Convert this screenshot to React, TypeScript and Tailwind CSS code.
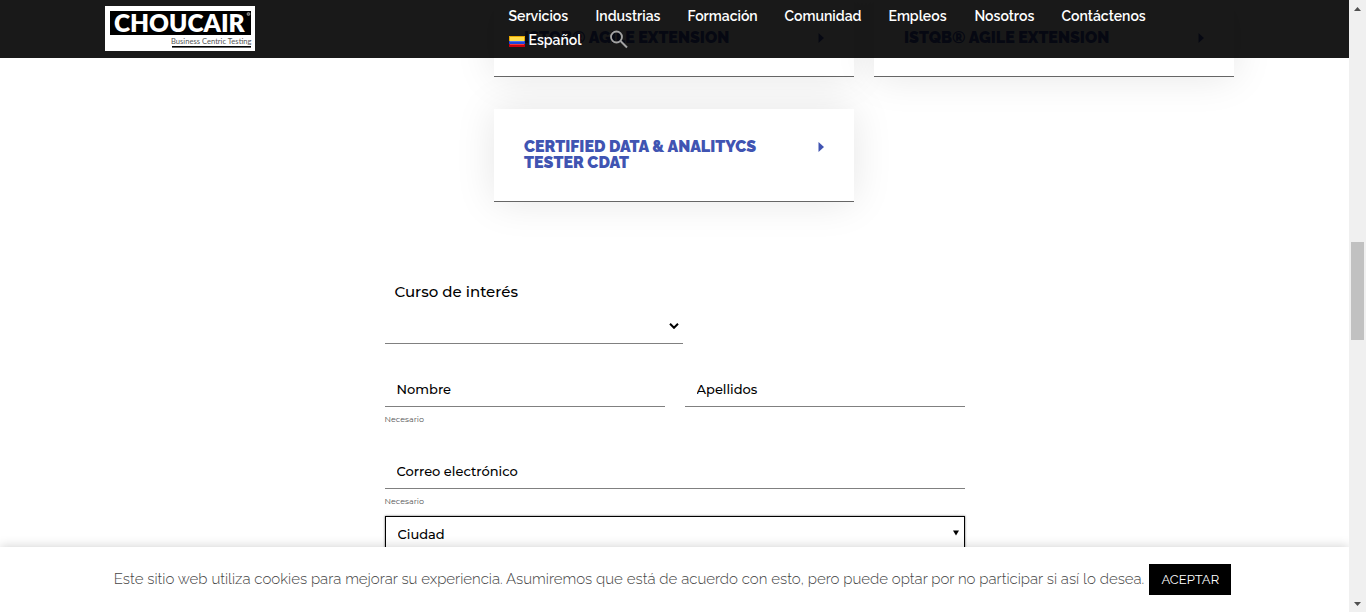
import React from "react";

const links = ["Servicios", "Industrias", "Formación", "Comunidad", "Empleos", "Nosotros", "Contáctenos"];

const courses = ["ISTQB® AGILE EXTENSION", "ISTQB® AGILE EXTENSION", "CERTIFIED DATA & ANALITYCS TESTER CDAT"];

function Logo() {
  return (
    <svg viewBox="0 0 150 45" className="block h-[45px] w-[150px]" role="img" aria-label="Choucair Business Centric Testing">
      <rect width="150" height="45" fill="#fff" />
      <rect x="5" y="5" width="141" height="24" fill="#000" />
      <text x="9" y="26" fontSize="24.500" fontWeight="800" fill="#fff" fontFamily="Lato, sans-serif">CHOUCAIR</text>
      <circle cx="143.500" cy="8" r="1.500" fill="#666" stroke="#bbb" strokeWidth="0.600" />
      <text x="66" y="38" fontSize="7.600" fill="#555" fontFamily="Lato, sans-serif">Business Centric Testing</text>
      <rect x="67" y="40" width="79" height="1.600" fill="#000" />
    </svg>
  );
}

function Flag() {
  return (
    <svg viewBox="0 0 16 11" className="mt-0.5 h-[11px] w-4" aria-hidden="true">
      <rect width="16" height="11" fill="#e8a800" />
      <rect x="1" y="1" width="14" height="4" fill="#ffdc4a" />
      <rect y="5" width="16" height="3" fill="#1c46d8" />
      <rect x="1" y="5" width="14" height="1" fill="#4d74ee" />
      <rect y="8" width="16" height="3" fill="#c8000a" />
      <rect x="1" y="8" width="14" height="1" fill="#f03a3a" />
    </svg>
  );
}

function Header() {
  return (
    <header className="absolute inset-x-0 top-0 z-10 h-[58px] bg-black/90 text-white">
      <div className="mx-auto flex max-w-[1140px] items-start pt-1.5">
        <a href="#inicio" className="mr-[254px] shrink-0">
          <Logo />
        </a>
        <nav className="text-sm leading-5 font-semibold">
          <ul className="grid grid-cols-[87px_92px_97px_104px_86px_87px_84px] gap-y-1">
            {links.map((l) => (
              <li key={l}>
                <a href={"#" + l.toLowerCase()}>{l}</a>
              </li>
            ))}
            <li>
              <a href="#es" className="flex items-center gap-1">
                <Flag />
                Español
              </a>
            </li>
            <li className="pl-3">
              <button type="button" aria-label="Buscar" className="block">
                <svg viewBox="0 0 20 20" className="size-5 text-[#a3a3a3]" fill="none" stroke="currentColor">
                  <circle cx="8.500" cy="7" r="5.500" strokeWidth="1.800" />
                  <path d="M12.500 11l6.500 6.500" strokeWidth="2" />
                </svg>
              </button>
            </li>
          </ul>
        </nav>
      </div>
    </header>
  );
}

function Course({ title }: { title: string }) {
  return (
    <button
      type="button"
      className="flex items-start justify-between border-b border-[#666] bg-white p-[30px] text-left text-base leading-4 font-black text-[#4054b2] shadow-[0_0_40px_rgba(0,0,0,0.1)]"
    >
      <span className="w-[245px]">{title}</span>
      <svg viewBox="0 0 6 10" className="mt-[3px] h-2.5 w-1.5" fill="currentColor" aria-hidden="true">
        <path d="M0.500 0L6 5L0.500 10Z" />
      </svg>
    </button>
  );
}

const field =
  "block h-[34px] w-full border-b border-[#808080] bg-transparent px-3 pb-0.5 text-[13px] font-medium text-black outline-none placeholder:text-black placeholder:opacity-100";

function Field({ label, type = "text", required = false }: { label: string; type?: string; required?: boolean }) {
  return (
    <div className="flex-1">
      <input type={type} aria-label={label} placeholder={label} className={field} />
      {required && <p className="mt-1.5 text-[8px] leading-3 text-[#555]">Necesario</p>}
    </div>
  );
}

function ContactForm() {
  return (
    <form className="mx-auto mt-20 max-w-[580px] font-[Montserrat,Inter,sans-serif]">
      <label htmlFor="curso" className="ml-2.5 block text-[15px] leading-5 font-medium text-black">
        Curso de interés
      </label>
      <div className="relative mt-2 w-[298px]">
        <select id="curso" className="block h-[34px] w-full appearance-none border-b border-[#808080] bg-white px-3 text-[13px] outline-none">
          <option></option>
        </select>
        <svg viewBox="0 0 10 6" className="pointer-events-none absolute top-[13px] right-1 h-1.5 w-2.5" fill="none" stroke="#000" strokeWidth="2">
          <path d="M1 0.800L5 4.800L9 0.800" />
        </svg>
      </div>
      <div className="mt-[29px] flex gap-5">
        <Field label="Nombre" required />
        <Field label="Apellidos" />
      </div>
      <div className="mt-[30px]">
        <Field label="Correo electrónico" type="email" required />
      </div>
      <div className="relative mt-[9px]">
        <select
          aria-label="Ciudad"
          className="block h-[38px] w-full appearance-none border border-black bg-white px-3 text-[13px] font-medium text-black shadow-[0_0_2px_rgba(0,0,0,0.6)] outline-none"
        >
          <option>Ciudad</option>
        </select>
        <svg viewBox="0 0 6 6" className="pointer-events-none absolute top-[14px] right-1.5 size-1.5" aria-hidden="true">
          <path d="M0 0.500H6L3 5.500Z" fill="#000" />
        </svg>
      </div>
    </form>
  );
}

function CookieBar() {
  return (
    <div className="absolute inset-x-0 bottom-0 z-10 flex h-[65px] items-center justify-center gap-[5px] bg-white pr-1 shadow-[0_-1px_10px_rgba(0,0,0,0.17)]">
      <p className="pb-0.5 text-[15px] leading-5 font-light whitespace-nowrap text-[#444]">
        Este sitio web utiliza cookies para mejorar su experiencia. Asumiremos que está de acuerdo con esto, pero puede optar por no participar si así lo desea.
      </p>
      <button type="button" className="w-[82px] bg-black py-[7px] text-[13px] leading-[17px] text-white">
        ACEPTAR
      </button>
    </div>
  );
}

function ScrollTrack() {
  return (
    <div className="flex w-[17px] shrink-0 flex-col items-center bg-[#f0f0f0]" aria-hidden="true">
      <svg viewBox="0 0 17 17" className="size-[17px]" fill="#505050">
        <path d="M8.500 7L12 11H5Z" />
      </svg>
      <div className="mt-[225px] h-[98px] w-[13px] bg-[#c1c1c1]" />
      <svg viewBox="0 0 17 17" className="mt-auto size-[17px]" fill="#505050">
        <path d="M5 7H12L8.500 11Z" />
      </svg>
    </div>
  );
}

export default function App() {
  return (
    <div className="flex h-screen bg-white font-[Raleway,Lato,sans-serif]">
      <div className="relative min-w-0 flex-1 overflow-hidden">
        <Header />
        <main>
          <section className="mx-auto flex max-w-[1119px] justify-end">
            <div className="grid w-[740px] grid-cols-2 gap-x-5 gap-y-8">
              {courses.map((c, i) => (
                <Course key={i} title={c} />
              ))}
            </div>
          </section>
          <ContactForm />
        </main>
        <CookieBar />
      </div>
      <ScrollTrack />
    </div>
  );
}
